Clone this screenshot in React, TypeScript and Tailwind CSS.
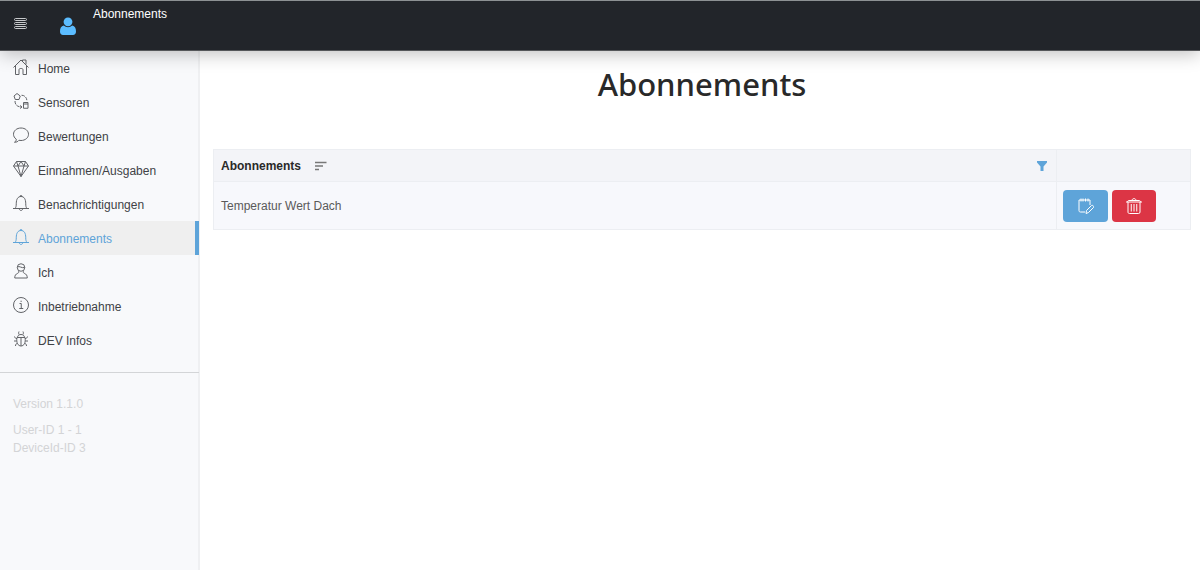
import React, { useState } from 'react';

type IconProps = {
    children: React.ReactNode;
    className?: string;
};

// 32er Raster, dünne Linien
function Icon({ children, className = 'size-4' }: IconProps) {
    return (
        <svg
            viewBox="0 0 32 32"
            className={`shrink-0 ${className}`}
            fill="none"
            stroke="currentColor"
            strokeWidth={2}
            strokeLinejoin="round"
            aria-hidden="true"
        >
            {children}
        </svg>
    );
}

const bell = (
    <>
        <path d="M0 27h32M4 27c2-2.500 2.500-5 2.500-9.500C6.500 8 10 3 16 3s9.500 5 9.500 14.500c0 4.500.5 7 2.500 9.500" />
        <path d="M14 3c0-3 4-3 4 0M12.500 27.500c.5 4.500 6.500 4.500 7 0" />
    </>
);

const menu = [
    {
        label: 'Home',
        icon: (
            <>
                <path d="M1 17 16 2l15 15" />
                <path d="M5 14v17h7V22c0-2 1-3 2.500-3h3c1.500 0 2.500 1 2.500 3v9h7V14M19 4V2h7v9" />
            </>
        ),
    },
    {
        label: 'Sensoren',
        icon: (
            <>
                <path d="m8 1 6.500 5-2.500 7H4.500L2 6Z" />
                <rect x="21" y="19" width="9" height="11.500" />
                <path d="M21 22h9" />
                <path d="M17 4.500c6 0 10.500 4 11 12M4 16c0 8 5 12 14 12" strokeDasharray="7 2" />
                <path d="m14 25 4 3-4 3" />
            </>
        ),
    },
    {
        label: 'Bewertungen',
        icon: <path d="M16 2C7.500 2 1 7.500 1 14.500c0 4 2.200 7.500 5.500 9.800.1 2.700-1 4.700-3.500 6.200 4 .1 6.800-1.200 9-4 1.300.3 2.600.5 4 .5 8.500 0 15-5.500 15-12.500S24.500 2 16 2Z" />,
    },
    {
        label: 'Einnahmen/Ausgaben',
        icon: (
            <>
                <path d="M7 1h18l6 9-15 21L1 10Z" />
                <path d="M1 10h30M7 1l3 9 6 21 6-21 3-9M10 10l6-9 6 9" />
            </>
        ),
    },
    { label: 'Benachrichtigungen', icon: bell },
    { label: 'Abonnements', icon: bell },
    {
        label: 'Ich',
        icon: (
            <>
                <circle cx="16" cy="9" r="7.500" />
                <path d="M8.500 8c5-3 8 3 15 1M11 15.500c1 3 .5 4-1.500 5C5 22.500 3.500 25 3.500 30h25c0-5-1.500-7.500-6-9.500-2-1-2.500-2-1.500-5" />
            </>
        ),
    },
    {
        label: 'Inbetriebnahme',
        icon: (
            <>
                <circle cx="16" cy="16" r="15" />
                <path d="M13 13h3.500v10M12.500 23h8M15 8.500h2.500" />
            </>
        ),
    },
    {
        label: 'DEV Infos',
        icon: (
            <>
                <path d="M8 13h16c2 10-2 17-8 17S6 23 8 13ZM9 13c0-8 14-8 14 0M16 13v17" />
                <path d="M12 7c-1-2-1-4 0-6m8 6c1-2 1-4 0-6M8 15c-3 0-4-1-5-4m21 4c3 0 4-1 5-4M7 20H2m23 0h5M9 25c-3 0-4 2-4 5m18-5c3 0 4 2 4 5" />
            </>
        ),
    },
];

function Header() {
    return (
        <header className="relative z-10 flex h-[51px] items-start border-t border-b border-t-[#8d9193] border-b-[#55575a] bg-[#22252a] text-white shadow-[0_3px_18px_rgba(0,0,0,0.25)]">
            <button type="button" aria-label="Menü" className="mt-[15px] ml-[13px] flex size-4 items-center justify-center text-[#c8cacc]">
                <svg viewBox="0 0 14 14" className="size-3.5" fill="none" stroke="currentColor" aria-hidden="true">
                    <rect x="0.500" y="1.500" width="12" height="2" rx="1" />
                    <rect x="0.500" y="5.500" width="12" height="2" rx="1" />
                    <rect x="0.500" y="9.500" width="12" height="2" rx="1" />
                </svg>
            </button>
            <button type="button" aria-label="Profil" className="mt-4 ml-[31px] text-[#5bbcff]">
                <svg viewBox="0 0 16 18" className="h-[18px] w-4" fill="currentColor" aria-hidden="true">
                    <circle cx="8" cy="4.800" r="4.400" />
                    <path d="M3.800 8.500C1 9 0 11.500 0 14.500 0 16.800 1.200 18 3 18h10c1.800 0 3-1.200 3-3.500 0-3-1-5.500-3.800-6a6 6 0 0 1-8.400 0Z" />
                </svg>
            </button>
            <span className="mt-1 ml-[17px] text-xs leading-[18px]">Abonnements</span>
        </header>
    );
}

function Sidebar() {
    const [active, setActive] = useState('Abonnements');

    return (
        <aside className="w-[200px] shrink-0 border-r-2 border-[#eff0f2] bg-[#f8f9fb]">
            <nav className="-mr-px border-b border-[#d3d5d7] pb-[15px]">
                {menu.map((item) => (
                    <a
                        key={item.label}
                        href="#"
                        onClick={() => setActive(item.label)}
                        className={`flex h-[34px] items-center gap-[9px] border-r-4 pl-[13px] text-xs ${
                            active === item.label
                                ? 'border-[#5ea4d9] bg-[#efefef] text-[#5ea4d9]'
                                : 'border-transparent text-[#404246]'
                        }`}
                    >
                        <Icon className={`mb-0.5 size-4 ${active === item.label ? 'text-[#5ea4d9]' : 'text-[#626468]'}`}>
                            {item.icon}
                        </Icon>
                        <span className="mt-0.5">{item.label}</span>
                    </a>
                ))}
            </nav>
            <div className="px-[13px] pt-[22px] text-xs leading-[18px] text-[#d3d4d6]">
                <p className="mb-2">Version 1.1.0</p>
                <p>User-ID 1 - 1</p>
                <p>DeviceId-ID 3</p>
            </div>
        </aside>
    );
}

function SubscriptionTable() {
    return (
        <table className="w-full table-fixed border-collapse border border-[#eceef2] text-left text-xs text-[#5a5a5a]">
            <colgroup>
                <col />
                <col className="w-[134px]" />
            </colgroup>
            <thead className="bg-[#f3f4f8] text-[#292929]">
                <tr className="h-8 border-b border-[#eceef2]">
                    <th className="border-r border-[#eceef2] px-[7px]">
                        <div className="flex items-center">
                            <span>Abonnements</span>
                            <button type="button" aria-label="Sortieren" className="ml-3.5 text-[#777]">
                                <svg viewBox="0 0 12 10" className="h-2.5 w-3" stroke="currentColor" strokeWidth={1.300} aria-hidden="true">
                                    <path d="M0 1.500h11.500M0 5h8M0 8.500h4" />
                                </svg>
                            </button>
                            <button type="button" aria-label="Filtern" className="mr-px ml-auto text-[#5ea4d9]">
                                <svg viewBox="0 0 12 12" className="size-3" fill="currentColor" aria-hidden="true">
                                    <path d="M1 1h10v1.500L7.500 6.500V11h-3V6.500L1 2.500Z" />
                                </svg>
                            </button>
                        </div>
                    </th>
                    <td />
                </tr>
            </thead>
            <tbody className="bg-[#f7f8fc]">
                <tr className="h-12">
                    <td className="border-r border-[#eceef2] px-[7px]">Temperatur Wert Dach</td>
                    <td className="px-1.5">
                        <div className="flex gap-1">
                            <button type="button" aria-label="Bearbeiten" className="flex h-8 w-[45px] items-center justify-center rounded bg-[#5ea4d9] text-white">
                                <Icon className="size-4">
                                    <path d="M14 28H5c-2 0-3-1-3-3V4h22v10M6 1v6M10 1v6M15 1v6M20 1v6" />
                                    <path d="m16 31 1-6L27 15c2-1.500 5.500 1.500 4 4L21 29Z" />
                                </Icon>
                            </button>
                            <button type="button" aria-label="Löschen" className="flex h-8 w-11 items-center justify-center rounded bg-[#dc3545] text-white">
                                <Icon className="size-4">
                                    <path d="M0 8h32M4 8v20c0 2 1 3 3 3h18c2 0 3-1 3-3V8M3 8c0-2 1-3 3-3h20c2 0 3 1 3 3" />
                                    <path d="M12 5c0-5 8-5 8 0M10.500 12v15M16 12v15M21.500 12v15" />
                                </Icon>
                            </button>
                        </div>
                    </td>
                </tr>
            </tbody>
        </table>
    );
}

export default function App() {
    return (
        <div className="flex min-h-screen flex-col bg-white font-['Liberation_Sans',Arial,sans-serif]">
            <Header />
            <div className="flex flex-1">
                <Sidebar />
                <main className="min-w-0 flex-1 pt-[13px] pr-[9px] pl-[13px]">
                    <h1 className="mb-[45px] text-center font-['Noto_Sans','Open_Sans',sans-serif] text-[31px] leading-10 font-medium text-[#292929]">
                        Abonnements
                    </h1>
                    <SubscriptionTable />
                </main>
            </div>
        </div>
    );
}
